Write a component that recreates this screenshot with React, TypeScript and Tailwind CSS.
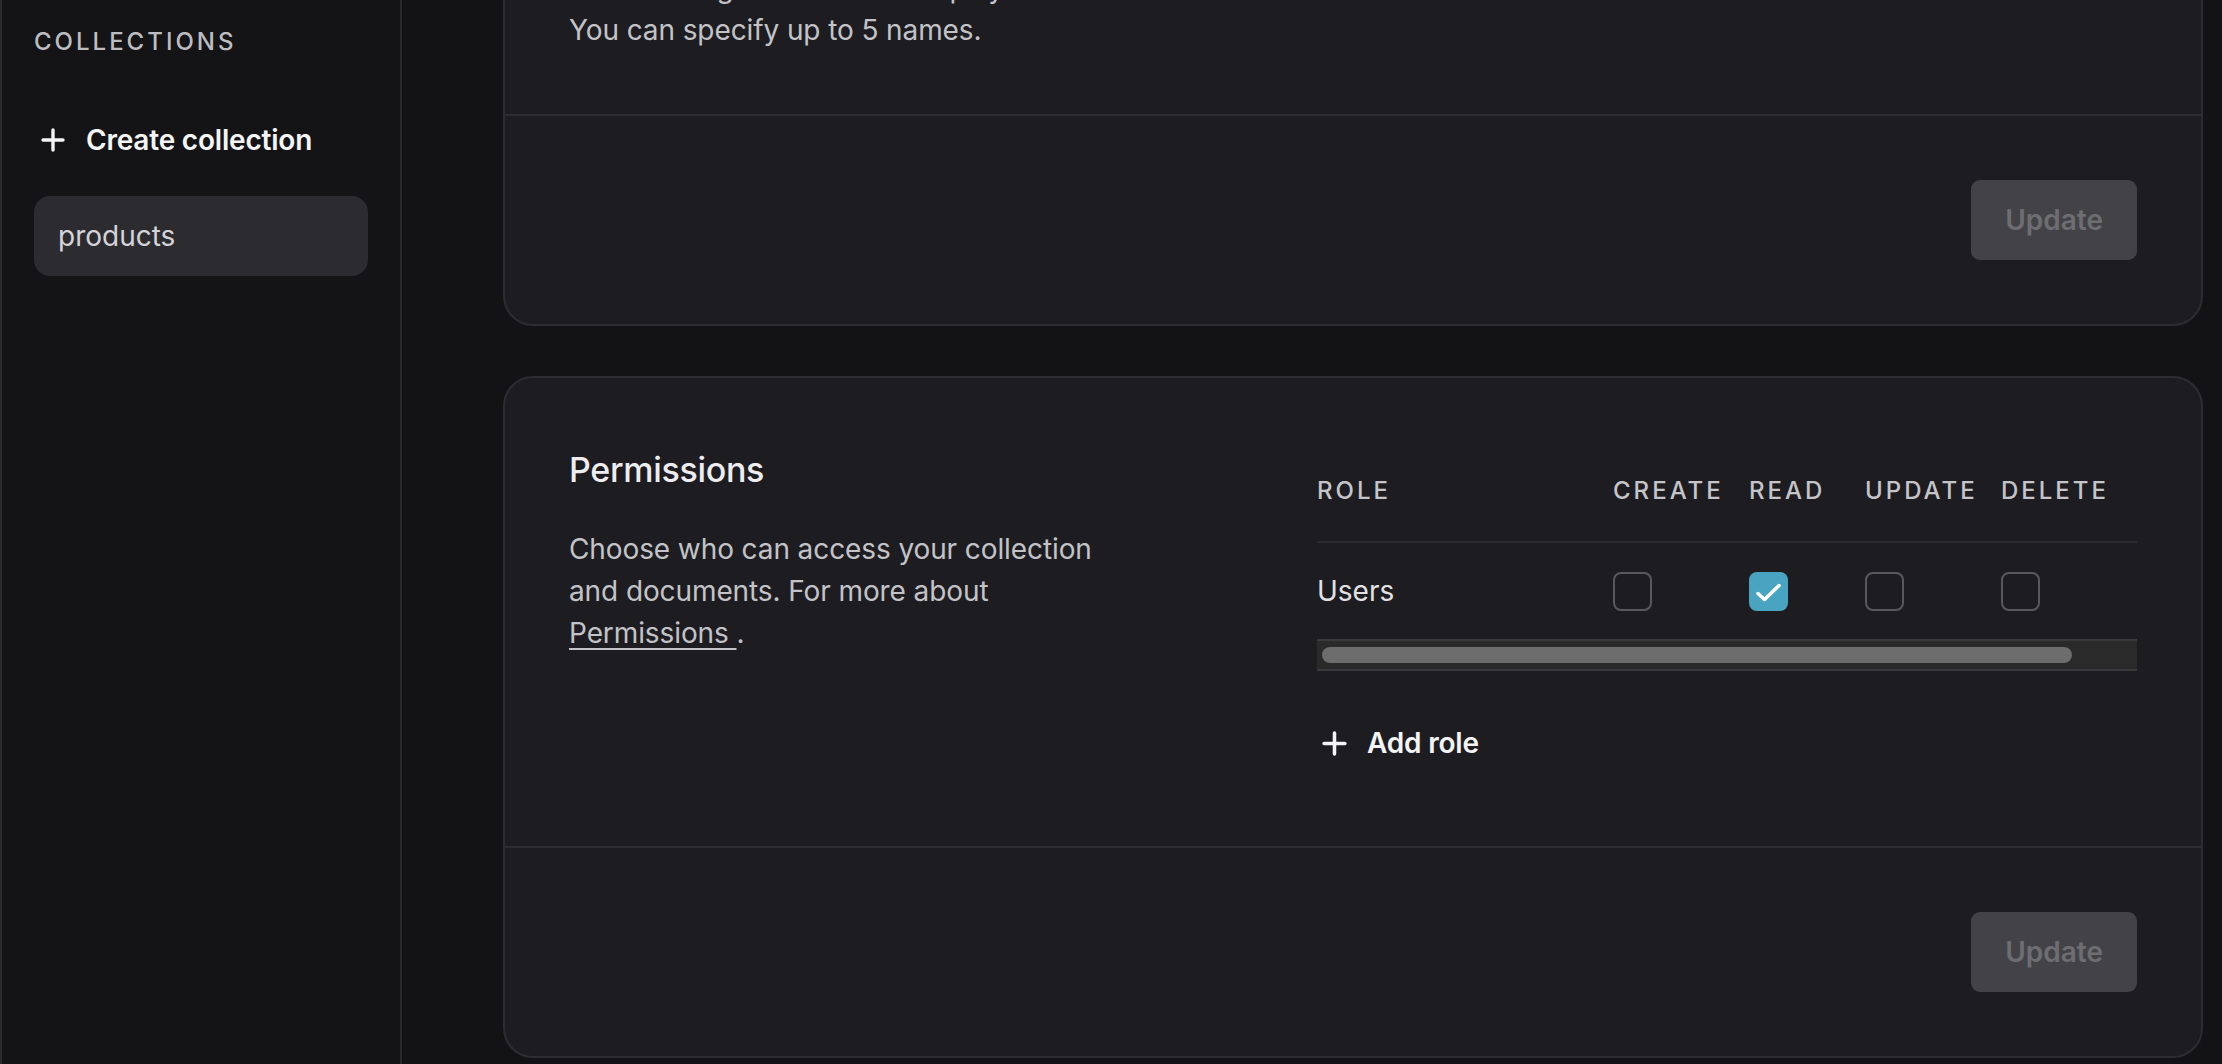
const font = { fontFamily: "Inter, 'Noto Sans', sans-serif" };

function PlusIcon({ size }: { size: number }) {
  return (
    <svg width={size} height={size} viewBox="0 0 24 24" fill="none" className="shrink-0">
      <path d="M12 2V22M2 12H22" stroke="currentColor" strokeWidth="3.4" strokeLinecap="round" />
    </svg>
  );
}

function Checkbox({ checked }: { checked?: boolean }) {
  if (checked) {
    return (
      <div className="flex h-[39px] w-[39px] items-center justify-center rounded-[8px] bg-[#49a4c1]">
        <svg width="39" height="39" viewBox="0 0 39 39" fill="none">
          <path d="M9 21.5L15.5 27.5L30 13.5" stroke="white" strokeWidth="3.5" strokeLinecap="round" strokeLinejoin="round" />
        </svg>
      </div>
    );
  }
  return <div className="h-[39px] w-[39px] rounded-[8px] border-2 border-[#58585d]" />;
}

function UpdateButton() {
  return (
    <button className="h-[80px] rounded-[9px] bg-[#434347] px-[34px] text-[28px] font-semibold text-[#6d6d72]">
      Update
    </button>
  );
}

function Sidebar() {
  return (
    <aside className="flex w-[402px] shrink-0 flex-col border-x-2 border-[#29292c] bg-[#141416] pl-[32px] pr-[32px] pt-[30px]">
      <div className="text-[24px] font-medium leading-[24px] tracking-[3px] text-[#bdbdc1]">COLLECTIONS</div>
      <button className="mt-[66px] flex h-[40px] items-center gap-[21px] pl-[7px] text-[28px] font-semibold tracking-[-0.2px] text-[#f4f4f6]">
        <PlusIcon size={24} />
        Create collection
      </button>
      <div className="mt-[36px] flex h-[80px] items-center rounded-[16px] bg-[#2c2c30] pl-[24px] text-[28px] text-[#d4d4d8]">
        products
      </div>
    </aside>
  );
}

function TopCard() {
  return (
    <section className="rounded-b-[30px] border-2 border-[#2d2d31] bg-[#1d1d21]">
      <div className="px-[64px] pb-[63px] pt-[71px]">
        <h2 className="text-[34px] font-medium leading-[42px] text-[#ededf0]">Display name</h2>
        <p className="mt-[37px] whitespace-nowrap text-[28px] leading-[42px] tracking-[-0.1px] text-[#c3c3c7]">
          Select string attributes as display names.
          <br />
          You can specify up to 5 names.
        </p>
      </div>
      <div className="flex justify-end border-t-2 border-[#2d2d31] px-[64px] py-[64px]">
        <UpdateButton />
      </div>
    </section>
  );
}

const cols = ["CREATE", "READ", "UPDATE", "DELETE"];

function PermissionsCard() {
  return (
    <section className="rounded-[30px] border-2 border-[#2d2d31] bg-[#1d1d21]">
      <div className="flex px-[64px] pb-[83px] pt-[71px]">
        <div className="w-[748px] shrink-0">
          <h2 className="text-[34px] font-medium leading-[42px] tracking-[-0.3px] text-[#ededf0]">Permissions</h2>
          <p className="mt-[37px] w-[545px] text-[28px] leading-[42px] tracking-[-0.1px] text-[#c3c3c7]">
            Choose who can access your collection and documents. For more about{" "}
            <a className="underline decoration-2 underline-offset-[5px]">Permissions </a>.
          </p>
        </div>
        <div className="flex-1">
          <div className="grid grid-cols-[296px_136px_116px_136px_136px] border-b-2 border-[#2b2b2f] pb-[38px] pt-[30px] text-[24px] font-medium leading-[24px] tracking-[3px] text-[#c5c5c9]">
            <div>ROLE</div>
            {cols.map((c) => (
              <div key={c}>{c}</div>
            ))}
          </div>
          <div className="grid h-[96px] grid-cols-[296px_136px_116px_136px_136px] items-center">
            <div className="text-[28px] text-[#e2e2e5]">Users</div>
            <Checkbox />
            <Checkbox checked />
            <Checkbox />
            <Checkbox />
          </div>
          <div className="flex h-[32px] items-center border-y-2 border-[#3a3a3c] bg-[#2a2a2a] pl-[5px] pr-[65px]">
            <div className="h-[16px] flex-1 rounded-full bg-[#6d6d6d]" />
          </div>
          <button className="mt-[52px] flex h-[40px] items-center gap-[20px] pl-[5px] text-[28px] font-semibold tracking-[-0.2px] text-[#f4f4f6]">
            <PlusIcon size={25} />
            Add role
          </button>
        </div>
      </div>
      <div className="flex justify-end border-t-2 border-[#2d2d31] px-[64px] py-[64px]">
        <UpdateButton />
      </div>
    </section>
  );
}

export default function App() {
  return (
    <div style={font} className="flex h-[1064px] w-full overflow-hidden bg-[#131316]">
      <Sidebar />
      <main className="flex flex-1 flex-col gap-[50px] pl-[101px] pr-[20px]">
        <div className="-mt-[185px]">
          <TopCard />
        </div>
        <PermissionsCard />
      </main>
    </div>
  );
}
